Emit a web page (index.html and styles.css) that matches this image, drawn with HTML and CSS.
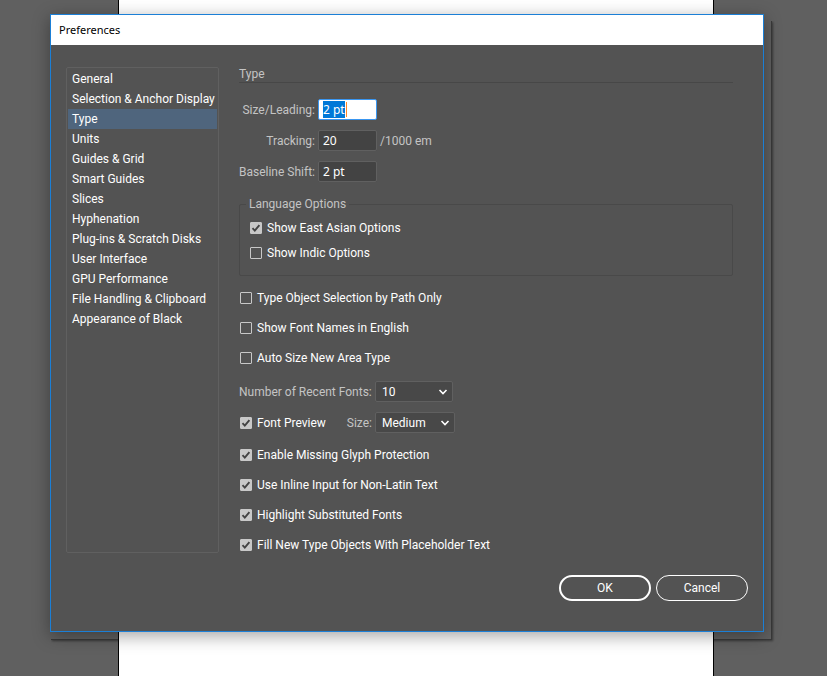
FILE: index.html
```html
<!DOCTYPE html>
<html lang="en">
<head>
<meta charset="utf-8">
<title>Preferences</title>
<link rel="stylesheet" href="styles.css">
</head>
<body>
<div class="artboard"></div>
<form class="dialog" role="dialog" aria-labelledby="dialog-title">
  <h1 class="titlebar" id="dialog-title">Preferences</h1>
  <div class="body">
    <nav class="sidebar">
      <a href="#">General</a>
      <a href="#">Selection &amp; Anchor Display</a>
      <a href="#" class="current" aria-current="page">Type</a>
      <a href="#">Units</a>
      <a href="#">Guides &amp; Grid</a>
      <a href="#">Smart Guides</a>
      <a href="#">Slices</a>
      <a href="#">Hyphenation</a>
      <a href="#">Plug-ins &amp; Scratch Disks</a>
      <a href="#">User Interface</a>
      <a href="#">GPU Performance</a>
      <a href="#">File Handling &amp; Clipboard</a>
      <a href="#">Appearance of Black</a>
    </nav>
    <main class="panel">
      <h2>Type</h2>
      <div class="fields">
        <label for="leading">Size/Leading:</label>
        <span class="field active"><input class="text" id="leading" type="text" value="2 pt"></span>
        <label for="tracking">Tracking:</label>
        <span class="field"><input class="text" id="tracking" type="text" value="20"> <span>/1000 em</span></span>
        <label for="baseline">Baseline Shift:</label>
        <span class="field"><input class="text" id="baseline" type="text" value="2 pt"></span>
      </div>
      <fieldset>
        <legend>Language Options</legend>
        <label class="check"><input type="checkbox" checked>Show East Asian Options</label>
        <label class="check"><input type="checkbox">Show Indic Options</label>
      </fieldset>
      <div class="checks">
        <label class="check"><input type="checkbox">Type Object Selection by Path Only</label>
        <label class="check"><input type="checkbox">Show Font Names in English</label>
        <label class="check"><input type="checkbox">Auto Size New Area Type</label>
      </div>
      <div class="choices">
        <div class="choice">
          <div class="lead"><label for="recent">Number of Recent Fonts:</label></div>
          <select id="recent"><option>10</option></select>
        </div>
        <div class="choice">
          <div class="lead">
            <label class="check"><input type="checkbox" checked>Font Preview</label>
            <label for="size">Size:</label>
          </div>
          <select id="size" class="wide"><option>Medium</option></select>
        </div>
      </div>
      <div class="checks">
        <label class="check"><input type="checkbox" checked>Enable Missing Glyph Protection</label>
        <label class="check"><input type="checkbox" checked>Use Inline Input for Non-Latin Text</label>
        <label class="check"><input type="checkbox" checked>Highlight Substituted Fonts</label>
        <label class="check"><input type="checkbox" checked>Fill New Type Objects With Placeholder Text</label>
      </div>
    </main>
  </div>
  <div class="actions">
    <button type="submit" class="primary">OK</button>
    <button type="button">Cancel</button>
  </div>
</form>
<script src="script.js"></script>
</body>
</html>
```
FILE: script.js
```js
const leading = document.getElementById("leading");
leading.focus();
leading.select();
```
FILE: styles.css
```css
* { box-sizing: border-box; }

body {
  margin: 0;
  min-height: 100vh;
  overflow: hidden;
  background: #606060;
  color: #fff;
  font: 12px/16px Roboto, "Open Sans", sans-serif;
}

.artboard {
  position: absolute;
  inset: 0 113px 0 118px;
  background: #fff;
  border: solid #000;
  border-width: 0 1px;
}

.dialog {
  position: relative;
  margin: 14px 63px 44px 50px;
  border: 1px solid #1b7fd6;
  background: #535353;
  box-shadow: 0 4px 16px rgba(0, 0, 0, 0.36);
}

/* Thin offset shadow along the right and bottom edges */
.dialog::before {
  content: "";
  position: absolute;
  inset: 6px -9px -9px 0;
  z-index: -1;
  border: solid rgba(0, 0, 0, 0.4);
  border-width: 0 1px 1px 0;
  box-shadow: 1px 1px 2px rgba(0, 0, 0, 0.4);
  clip-path: inset(0 -3px -3px 0);
}

.titlebar {
  margin: 0;
  padding: 0 8px;
  background: #fff;
  color: #000;
  font: 11px/30px "Noto Sans", "Open Sans", sans-serif;
}

.body {
  display: grid;
  grid-template-columns: 153px 1fr;
  gap: 20px;
  padding: 22px 30px 0 15px;
}

.sidebar {
  padding: 1px;
  border: 1px solid #606060;
  border-radius: 2px;
}

.sidebar a {
  display: block;
  padding: 0 4px;
  color: #fff;
  line-height: 20px;
  text-decoration: none;
  white-space: nowrap;
}

.sidebar .current { background: #4f657d; }

.panel { color: #c4c4c4; white-space: nowrap; }

h2 {
  margin: 0 0 16px;
  border-bottom: 1px solid #474747;
  font: inherit;
  line-height: 15px;
}

.fields {
  display: grid;
  grid-template-columns: 76px 1fr;
  gap: 10px 3px;
  align-items: center;
}

.fields label { justify-self: end; }

.field {
  position: relative;
  display: flex;
  align-items: center;
  gap: 3px;
}

.text {
  width: 59px;
  height: 21px;
  padding: 0 4px;
  border: 1px solid #606060;
  border-radius: 2px;
  outline: 0;
  background: #434343;
  color: #fff;
  font: 12px/16px "Noto Sans", "Open Sans", sans-serif;
}

.active .text { background: #fff; border-color: #3a96f0; color: #000; }
.text::selection { background: #0078d7; color: #fff; }

/* Insertion point at the end of the selection */
.active::after {
  content: "";
  position: absolute;
  left: 28px;
  top: 3px;
  width: 1px;
  height: 15px;
  background: #ff8728;
}

fieldset {
  margin: 14px 0 0;
  padding: 8px 10px 14px;
  border: 1px solid #494949;
  border-radius: 2px;
  display: grid;
  gap: 9px;
}

legend { margin-left: -4px; padding: 0 3px; }

.checks {
  display: grid;
  gap: 14px;
  margin: 14px 0 0 1px;
}

.check {
  display: flex;
  align-items: center;
  gap: 5px;
  color: #fff;
}

.check input {
  appearance: none;
  width: 12px;
  height: 12px;
  margin: 0;
  border: 1px solid #c8c8c8;
  border-radius: 1px;
}

.check input:checked {
  background: #c8c8c8 url("data:image/svg+xml,%3Csvg xmlns='http://www.w3.org/2000/svg' viewBox='0 0 10 10'%3E%3Cpath d='M1.5 5.2l2.3 2.4 4.6-5.4' fill='none' stroke='%23434343' stroke-width='1.9'/%3E%3C/svg%3E") center / 10px 10px no-repeat;
}

.choices {
  display: grid;
  gap: 10px;
  margin: 15px 0 13px;
}

.choice { display: flex; align-items: center; gap: 3px; }

.lead {
  display: flex;
  justify-content: space-between;
  width: 133px;
}

.lead .check { margin-left: 1px; }

select {
  appearance: none;
  width: 78px;
  height: 21px;
  padding: 0 6px;
  border: 1px solid #606060;
  border-radius: 2px;
  color: #fff;
  font: inherit;
  background: #484848 url("data:image/svg+xml,%3Csvg xmlns='http://www.w3.org/2000/svg' viewBox='0 0 10 6'%3E%3Cpath d='M1.5 1l3.5 3.5L8.5 1' fill='none' stroke='%23fff' stroke-width='1.6'/%3E%3C/svg%3E") right 4px center / 10px 6px no-repeat;
}

select.wide { width: 80px; }

.actions {
  display: flex;
  justify-content: flex-end;
  gap: 5px;
  padding: 22px 15px 30px;
}

.actions button {
  width: 92px;
  height: 26px;
  padding: 0;
  border: 1px solid #fff;
  border-radius: 13px;
  background: none;
  color: #fff;
  font: inherit;
}

.actions .primary { border-width: 2px; }
```
